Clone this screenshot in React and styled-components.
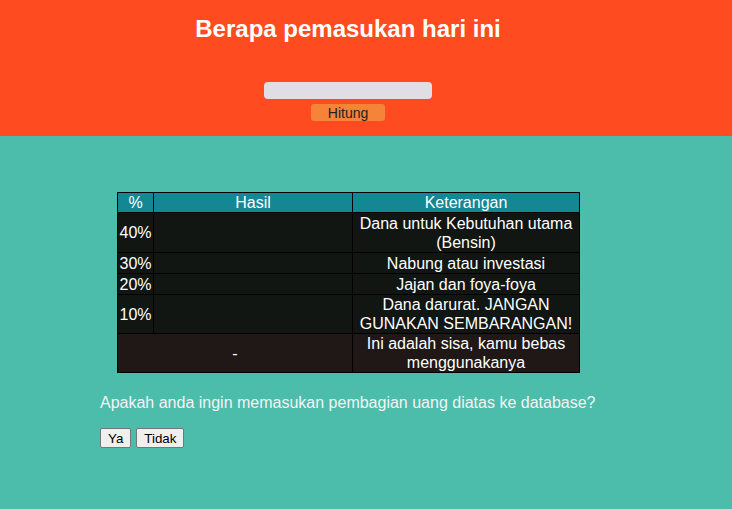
import React from 'react'
import styled, { createGlobalStyle } from 'styled-components'

const Global = createGlobalStyle`
  html, body { margin:0; padding:0; background:#4bbdaa; }
  body { font-family:"Liberation Sans", Arial, sans-serif; }
`

const Header = styled.header`
  background:#ff4b1f;
  height:136px;
  width:696px;
  padding-right:36px;
  display:flex;
  flex-direction:column;
  align-items:center;
  box-sizing:content-box;
`

const Title = styled.h1`
  margin:15px 0 0;
  font-size:24px;
  font-weight:bold;
  color:#fff;
  line-height:28px;
`

const Input = styled.input`
  margin-top:39px;
  width:168px;
  height:17px;
  border:none;
  border-radius:4px;
  background:#e0dee4;
  padding:0;
`

const CalcButton = styled.button`
  margin-top:5px;
  width:74px;
  height:17px;
  border:none;
  border-radius:3px;
  background:#f5843a;
  color:#222;
  font-family:"Liberation Sans", Arial, sans-serif;
  font-size:14px;
  line-height:16px;
  padding:0;
`

const Main = styled.main`
  padding:56px 0 0 100px;
`

const Table = styled.table`
  margin-left:17px;
  border-collapse:collapse;
  width:463px;
  font-size:16px;
  color:#fff;
  text-align:center;
  border:1px solid #000;
  th, td { border:1px solid #000; padding:0; line-height:19px; }
  th { background:#138894; font-weight:normal; height:19px; }
  td { background:#111613; }
`

const Row = styled.tr`
  td { height:${p => p.$h}px; ${p => p.$last ? 'background:#1f1816;' : ''} }
`

const Question = styled.p`
  margin:21px 0 0;
  font-size:16px;
  color:#f4f4f4;
`

const Actions = styled.div`
  display:flex;
  gap:5px;
  margin-top:16px;
`

const Choice = styled.button`
  height:20px;
  padding:0 7px;
  font-family:"Liberation Sans", Arial, sans-serif;
  font-size:13.33px;
  color:#000;
  background:#efefef;
  border:1px solid #767676;
  border-radius:2px;
`

const rows = [
  { p:'40%', k:<>Dana untuk Kebutuhan utama<br/>(Bensin)</>, h:39 },
  { p:'30%', k:'Nabung atau investasi', h:20 },
  { p:'20%', k:'Jajan dan foya-foya', h:20 },
  { p:'10%', k:<>Dana darurat. JANGAN<br/>GUNAKAN SEMBARANGAN!</>, h:38 },
]

export default function App() {
  return (
    <>
      <Global />
      <Header>
        <Title>Berapa pemasukan hari ini</Title>
        <Input type="text" />
        <CalcButton>Hitung</CalcButton>
      </Header>
      <Main>
        <Table>
          <thead>
            <tr>
              <th style={{ width: 35 }}>%</th>
              <th style={{ width: 198 }}>Hasil</th>
              <th>Keterangan</th>
            </tr>
          </thead>
          <tbody>
            {rows.map(r => (
              <Row key={r.p} $h={r.h}>
                <td>{r.p}</td>
                <td></td>
                <td>{r.k}</td>
              </Row>
            ))}
            <Row $h={38} $last>
              <td colSpan={2}>-</td>
              <td>Ini adalah sisa, kamu bebas<br/>menggunakanya</td>
            </Row>
          </tbody>
        </Table>
        <Question>Apakah anda ingin memasukan pembagian uang diatas ke database?</Question>
        <Actions>
          <Choice>Ya</Choice>
          <Choice>Tidak</Choice>
        </Actions>
      </Main>
    </>
  )
}
